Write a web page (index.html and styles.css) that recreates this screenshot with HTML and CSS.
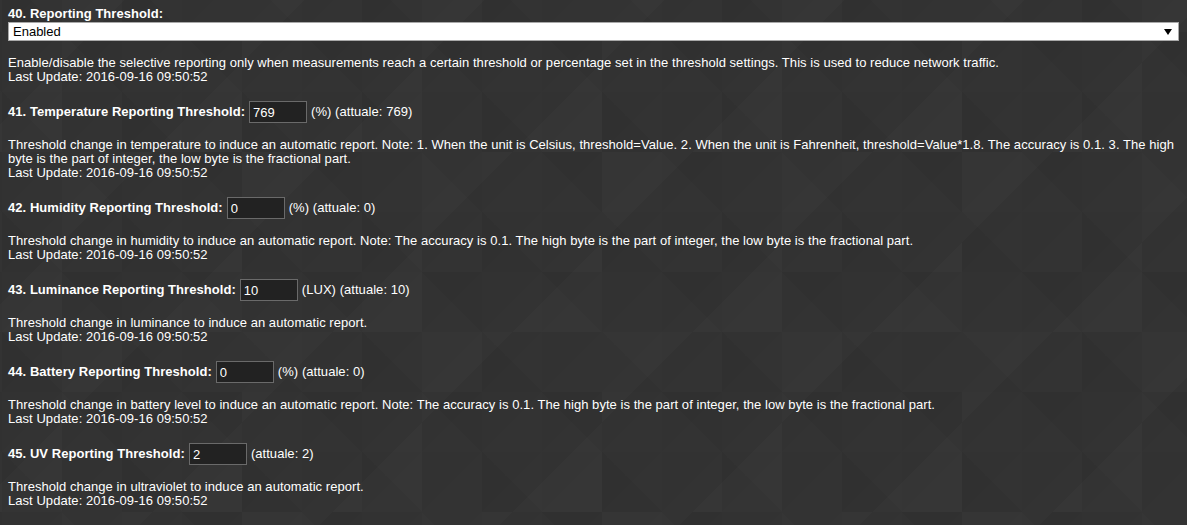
FILE: index.html
```html
<!DOCTYPE html>
<html lang="en">
    <head>
        <meta charset="UTF-8">
        <meta name="viewport" content="width=device-width, initial-scale=1.0">
        <title>Configurazione</title>
        <link rel="stylesheet" href="styles.css">
    </head>
    <body>
        <section class="config">
            <article class="item">
                <div class="title">40. Reporting Threshold:</div>
                <div class="select-wrap">
                    <select class="select">
                        <option>Enabled</option>
                        <option>Disabled</option>
                    </select>
                </div>
                <p class="desc">Enable/disable the selective reporting only when measurements reach a certain threshold or percentage set in the threshold settings. This is used to reduce network traffic.<br>Last Update: 2016-09-16 09:50:52</p>
            </article>

            <article class="item">
                <div class="row">
                    <b>41. Temperature Reporting Threshold:</b>
                    <input class="field" type="text" value="769">
                    <span>(%) (attuale: 769)</span>
                </div>
                <p class="desc">Threshold change in temperature to induce an automatic report. Note: 1. When the unit is Celsius, threshold=Value. 2. When the unit is Fahrenheit, threshold=Value*1.8. The accuracy is 0.1. 3. The high byte is the part of integer, the low byte is the fractional part.<br>Last Update: 2016-09-16 09:50:52</p>
            </article>

            <article class="item">
                <div class="row">
                    <b>42. Humidity Reporting Threshold:</b>
                    <input class="field" type="text" value="0">
                    <span>(%) (attuale: 0)</span>
                </div>
                <p class="desc">Threshold change in humidity to induce an automatic report. Note: The accuracy is 0.1. The high byte is the part of integer, the low byte is the fractional part.<br>Last Update: 2016-09-16 09:50:52</p>
            </article>

            <article class="item">
                <div class="row">
                    <b>43. Luminance Reporting Threshold:</b>
                    <input class="field" type="text" value="10">
                    <span>(LUX) (attuale: 10)</span>
                </div>
                <p class="desc">Threshold change in luminance to induce an automatic report.<br>Last Update: 2016-09-16 09:50:52</p>
            </article>

            <article class="item">
                <div class="row">
                    <b>44. Battery Reporting Threshold:</b>
                    <input class="field" type="text" value="0">
                    <span>(%) (attuale: 0)</span>
                </div>
                <p class="desc">Threshold change in battery level to induce an automatic report. Note: The accuracy is 0.1. The high byte is the part of integer, the low byte is the fractional part.<br>Last Update: 2016-09-16 09:50:52</p>
            </article>

            <article class="item">
                <div class="row">
                    <b>45. UV Reporting Threshold:</b>
                    <input class="field" type="text" value="2">
                    <span>(attuale: 2)</span>
                </div>
                <p class="desc">Threshold change in ultraviolet to induce an automatic report.<br>Last Update: 2016-09-16 09:50:52</p>
            </article>
        </section>
    </body>
</html>
```

FILE: styles.css
```css
* {
    padding: 0px;
    margin: 0px;
    box-sizing: border-box;
    outline: 0;
}

html {
    height: 100%;
}

body {
    min-height: 100%;
    padding: 7px 8px 0 8px;
    font-family: "Liberation Sans", Arial, sans-serif;
    font-size: 13px;
    line-height: 14px;
    letter-spacing: 0.05px;
    color: #fff;
    background-color: #333333;
    background-image:
        linear-gradient(45deg, rgba(0, 0, 0, 0.035) 25%, transparent 25%, transparent 75%, rgba(0, 0, 0, 0.035) 75%),
        linear-gradient(-45deg, rgba(255, 255, 255, 0.015) 25%, transparent 25%, transparent 75%, rgba(255, 255, 255, 0.015) 75%),
        linear-gradient(135deg, rgba(0, 0, 0, 0.025) 50%, transparent 50%);
    background-size: 120px 120px, 180px 180px, 60px 60px;
    background-position: 2px 32px, 62px -28px, 2px 32px;
}

.item {
    margin-bottom: 17px;
}

.title {
    font-weight: bold;
}

.select-wrap {
    position: relative;
    margin-top: 1px;
}

.select-wrap::after {
    content: "";
    position: absolute;
    right: 7px;
    top: 7px;
    border-left: 4px solid transparent;
    border-right: 4px solid transparent;
    border-top: 6px solid #000;
    pointer-events: none;
}

.select {
    -webkit-appearance: none;
    appearance: none;
    display: block;
    width: 100%;
    height: 19px;
    padding: 0 0 0 4px;
    border: 1px solid #a9a9a9;
    border-radius: 0;
    background-color: #fff;
    color: #000;
    font-family: "Liberation Sans", Arial, sans-serif;
    font-size: 13px;
}

.row {
    display: flex;
    align-items: center;
    gap: 4px;
    height: 22px;
}

.row b {
    font-weight: bold;
}

.field {
    width: 58px;
    height: 22px;
    padding: 0 3px;
    border: 1px solid #6a6a6a;
    background-color: #222;
    color: #fff;
    font-family: "Liberation Sans", Arial, sans-serif;
    font-size: 13px;
}

.desc {
    margin-top: 15px;
}
```
